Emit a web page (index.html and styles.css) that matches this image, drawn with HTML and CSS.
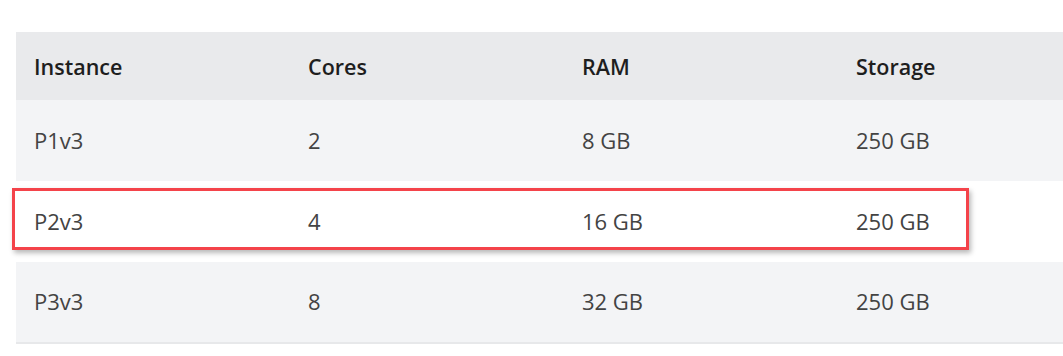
FILE: index.html
```html
<!DOCTYPE html>
<html lang="en">
<head>
<meta charset="utf-8">
<link rel="stylesheet" href="styles.css">
</head>
<body>
<div class="page">
  <table class="specs">
    <thead>
      <tr><th>Instance</th><th>Cores</th><th>RAM</th><th>Storage</th></tr>
    </thead>
    <tbody>
      <tr class="shaded"><td>P1v3</td><td>2</td><td>8 GB</td><td>250 GB</td></tr>
      <tr class="plain"><td>P2v3</td><td>4</td><td>16 GB</td><td>250 GB</td></tr>
      <tr class="shaded last"><td>P3v3</td><td>8</td><td>32 GB</td><td>250 GB</td></tr>
    </tbody>
  </table>
  <div class="callout"></div>
</div>
</body>
</html>
```
FILE: styles.css
```css
html, body {
  margin: 0;
  background: #ffffff;
  overflow: hidden;
}
.page {
  position: relative;
  padding: 32px 0 0 16px;
  font-family: "Open Sans", "Noto Sans", sans-serif;
}
.specs {
  border-collapse: collapse;
  table-layout: fixed;
  width: 1096px;
}
.specs th, .specs td {
  width: 274px;
  padding: 0 0 0 18px;
  text-align: left;
  box-sizing: border-box;
  white-space: nowrap;
}
.specs th {
  height: 68px;
  background: #e9eaec;
  color: #1e1e1e;
  font-weight: 600;
  font-size: 21.5px;
}
.specs td {
  height: 81px;
  color: #434343;
  font-size: 22px;
  font-weight: 400;
  padding-bottom: 2px;
}
.shaded td { background: #f3f4f6; }
.plain td { background: #ffffff; }
.last td { border-bottom: 2px solid #e7e8ea; }
.callout {
  position: absolute;
  left: 12px;
  top: 188px;
  width: 951px;
  height: 56px;
  border: 3px solid #f4434a;
  box-shadow: 2px 3px 5px rgba(0, 0, 0, 0.28);
}
```
